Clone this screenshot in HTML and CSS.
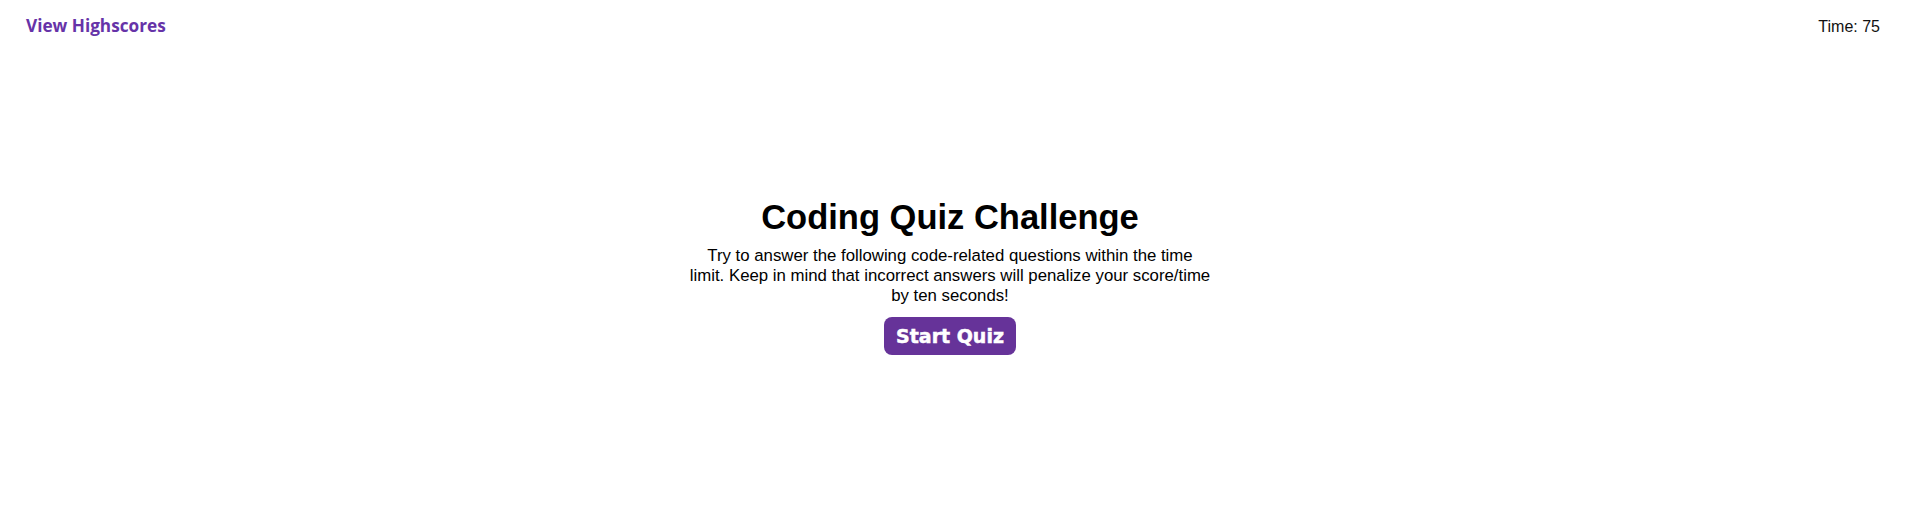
FILE: index.html
```html
<!DOCTYPE html>
<html lang="en">
<head>
<meta charset="utf-8">
<title>Coding Quiz Challenge</title>
<link rel="stylesheet" href="styles.css">
</head>
<body>
<header class="top-bar">
  <a class="highscores-link" href="#">View Highscores</a>
  <div class="timer">Time: <span class="timer-value">75</span></div>
</header>
<main class="intro">
  <h1 class="intro-title">Coding Quiz Challenge</h1>
  <p class="intro-text">Try to answer the following code-related questions within the time<br>limit. Keep in mind that incorrect answers will penalize your score/time by ten seconds!</p>
  <button class="start-btn" type="button">Start Quiz</button>
</main>
</body>
</html>
```
FILE: styles.css
```css
html, body {
  margin: 0;
  padding: 0;
  background: #ffffff;
}

body {
  font-family: "Liberation Sans", Arial, sans-serif;
  color: #000000;
}

.top-bar {
  display: flex;
  justify-content: space-between;
  align-items: baseline;
  padding: 17px 26px 0 26px;
  height: 35px;
  font-size: 16px;
  line-height: 18px;
}

.highscores-link {
  font-family: "Open Sans", "Noto Sans", sans-serif;
  font-weight: 700;
  font-size: 17.2px;
  color: #6633a8;
  text-decoration: none;
}

.timer {
  color: #111111;
}

.intro {
  display: flex;
  flex-direction: column;
  align-items: center;
  padding: 145px 6px 0 0;
}

.intro-title {
  margin: 0;
  font-size: 34.5px;
  line-height: 40px;
  font-weight: 700;
}

.intro-text {
  margin: 9px 0 0 0;
  max-width: 530px;
  font-size: 16.8px;
  line-height: 20px;
  text-align: center;
}

.start-btn {
  margin-top: 11px;
  height: 38px;
  padding: 0 12px;
  border: none;
  border-radius: 8px;
  background: #663399;
  color: #ffffff;
  font-family: "DejaVu Sans", sans-serif;
  font-weight: 700;
  font-size: 19px;
  -webkit-text-stroke: 0.5px #ffffff;
  cursor: pointer;
}
```
